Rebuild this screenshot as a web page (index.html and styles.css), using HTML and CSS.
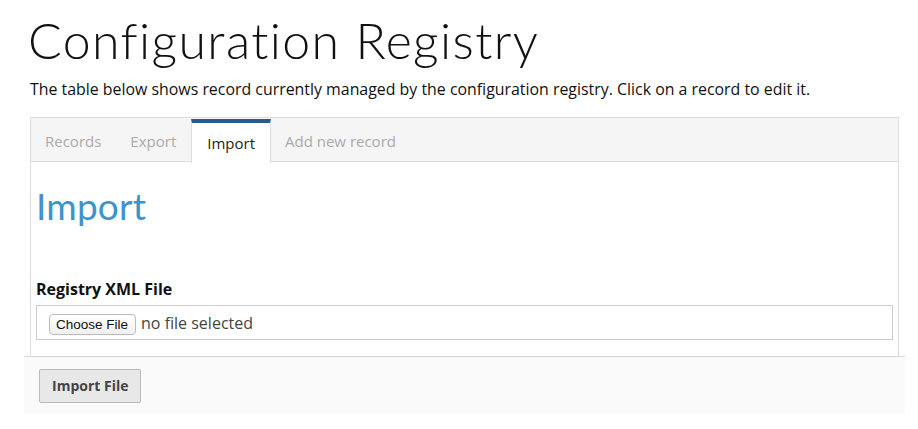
FILE: index.html
```html
<!DOCTYPE html>
<html>
<head>
<meta charset="utf-8">
<link rel="stylesheet" href="styles.css">
</head>
<body>
<div class="page">
  <h1 class="title">Configuration Registry</h1>
  <p class="lead">The table below shows record currently managed by the configuration registry. Click on a record to edit it.</p>
  <div class="panel">
    <div class="tabs">
      <span class="tab">Records</span>
      <span class="tab">Export</span>
      <span class="tab active">Import</span>
      <span class="tab">Add new record</span>
    </div>
    <div class="panel-body">
      <h2 class="section">Import</h2>
      <label class="field-label">Registry XML File</label>
      <div class="file-box">
        <span class="choose">Choose File</span>
        <span class="nofile">no file selected</span>
      </div>
    </div>
  </div>
  <div class="footer">
    <span class="btn">Import File</span>
  </div>
</div>
</body>
</html>
```

FILE: styles.css
```css
html, body { margin: 0; padding: 0; background: #fff; }
body { font-family: "Open Sans", "Liberation Sans", sans-serif; color: #222; }
.page { padding: 0 0 0 30px; width: 875px; }
.title {
  font-family: Lato, "Open Sans", sans-serif;
  font-weight: 300;
  font-size: 50px;
  line-height: 56px;
  margin: 12px 0 0 -2px;
  color: #111;
  letter-spacing: 1.4px;
}
.lead {
  font-size: 15.9px;
  line-height: 20px;
  margin: 11px 0 0 0;
  color: #111;
}
.panel {
  margin-top: 18px;
  width: 867px;
  border: 1px solid #ddd;
  border-bottom: none;
}
.tabs {
  display: flex;
  height: 43px;
  background: #f5f5f5;
  border-bottom: 1px solid #ddd;
}
.tab {
  font-size: 15px;
  color: #aaa;
  padding: 0 15px 0 14px;
  line-height: 47px;
}
.tab.active {
  background: #fff;
  color: #222;
  border-left: 1px solid #ddd;
  border-right: 1px solid #ddd;
  border-top: 4px solid #2b5b88;
  line-height: 41px;
  height: 40px;
  margin-top: 1px;
  margin-bottom: -1px;
  padding: 0 15px 0 15px;
}
.panel-body {
  padding: 22px 5px 16px 5px;
}
.section {
  font-family: Lato, "Open Sans", sans-serif;
  font-weight: 400;
  font-size: 37px;
  line-height: 44px;
  color: #3d93cc;
  margin: 0;
  letter-spacing: 0.2px;
}
.field-label {
  display: block;
  font-weight: 700;
  font-size: 16px;
  line-height: 20px;
  margin-top: 51px;
  color: #111;
}
.file-box {
  margin-top: 6px;
  height: 33px;
  border: 1px solid #ccc;
  display: flex;
  align-items: center;
  padding-left: 12px;
}
.choose {
  font-family: "Liberation Sans", Arial, sans-serif;
  font-size: 13.5px;
  color: #111;
  border: 1px solid #bbb;
  border-radius: 4px;
  background: linear-gradient(#fff, #f0f0f0);
  padding: 2px 7px 1px 6px;
  line-height: 16px;
  margin-top: 3px;
}
.nofile {
  font-size: 16px;
  color: #444;
  margin-left: 5px;
}
.footer {
  margin-left: -6px;
  width: 881px;
  border-top: 1px solid #d6d6d6;
  background: #fafafb;
  display: flex;
  align-items: center;
  padding-left: 15px;
  box-sizing: border-box;
  height: 58px;
}
.btn {
  font-weight: 700;
  font-size: 14px;
  color: #444;
  background: #e8e8e8;
  border: 1px solid #bbb;
  border-radius: 2px;
  padding: 0 12px;
  line-height: 32px;
}
```
